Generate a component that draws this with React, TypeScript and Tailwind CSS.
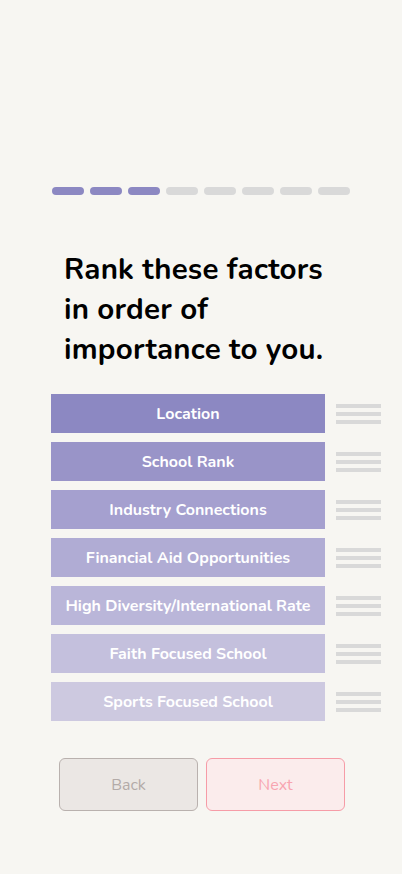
import React from "react";

const items: { label: string; bg: string }[] = [
  { label: "Location", bg: "bg-[#8c88c2]" },
  { label: "School Rank", bg: "bg-[#9994c8]" },
  { label: "Industry Connections", bg: "bg-[#a5a0cf]" },
  { label: "Financial Aid Opportunities", bg: "bg-[#b0acd4]" },
  { label: "High Diversity/International Rate", bg: "bg-[#bab6d9]" },
  { label: "Faith Focused School", bg: "bg-[#c4c0dd]" },
  { label: "Sports Focused School", bg: "bg-[#cdc9e0]" },
];

export default function App() {
  return (
    <div
      className="w-[402px] h-[874px] bg-[#f7f6f2] flex flex-col"
      style={{ fontFamily: '"Nunito", "Noto Sans", "Open Sans", sans-serif' }}
    >
      <div className="pt-[187px] px-[52px] flex gap-[6px]">
        {Array.from({ length: 8 }).map((_, i) => (
          <div
            key={i}
            className={
              i < 3
                ? "w-[32px] h-[8px] rounded-full bg-[#8c88c2]"
                : "w-[32px] h-[8px] rounded-full bg-[#d9d9d9]"
            }
          />
        ))}
      </div>
      <h1 className="mt-[54px] pl-[64px] pr-[30px] text-[29.5px] leading-[40px] font-bold text-black tracking-[0.2px]">
        Rank these factors
        <br />
        in order of
        <br />
        importance to you.
      </h1>
      <div className="mt-[25px] pl-[51px] flex flex-col gap-[9px]">
        {items.map((it) => (
          <div key={it.label} className="flex items-center gap-[11px]">
            <div
              className={`w-[274px] h-[39px] ${it.bg} flex items-center justify-center text-white text-[16px] font-bold whitespace-nowrap`}
            >
              {it.label}
            </div>
            <div className="flex flex-col gap-[4px]">
              <div className="w-[45px] h-[4px] bg-[#d9d9d9]" />
              <div className="w-[45px] h-[4px] bg-[#d9d9d9]" />
              <div className="w-[45px] h-[4px] bg-[#d9d9d9]" />
            </div>
          </div>
        ))}
      </div>
      <div className="mt-[37px] pl-[59px] flex gap-[8px]">
        <button className="w-[139px] h-[53px] rounded-[6px] border border-[#b9b1ae] bg-[#ebe7e4] text-[#b3aba8] text-[16px]">
          Back
        </button>
        <button className="w-[139px] h-[53px] rounded-[6px] border border-[#f69ca7] bg-[#fbecec] text-[#f8a5b0] text-[16px]">
          Next
        </button>
      </div>
    </div>
  );
}
